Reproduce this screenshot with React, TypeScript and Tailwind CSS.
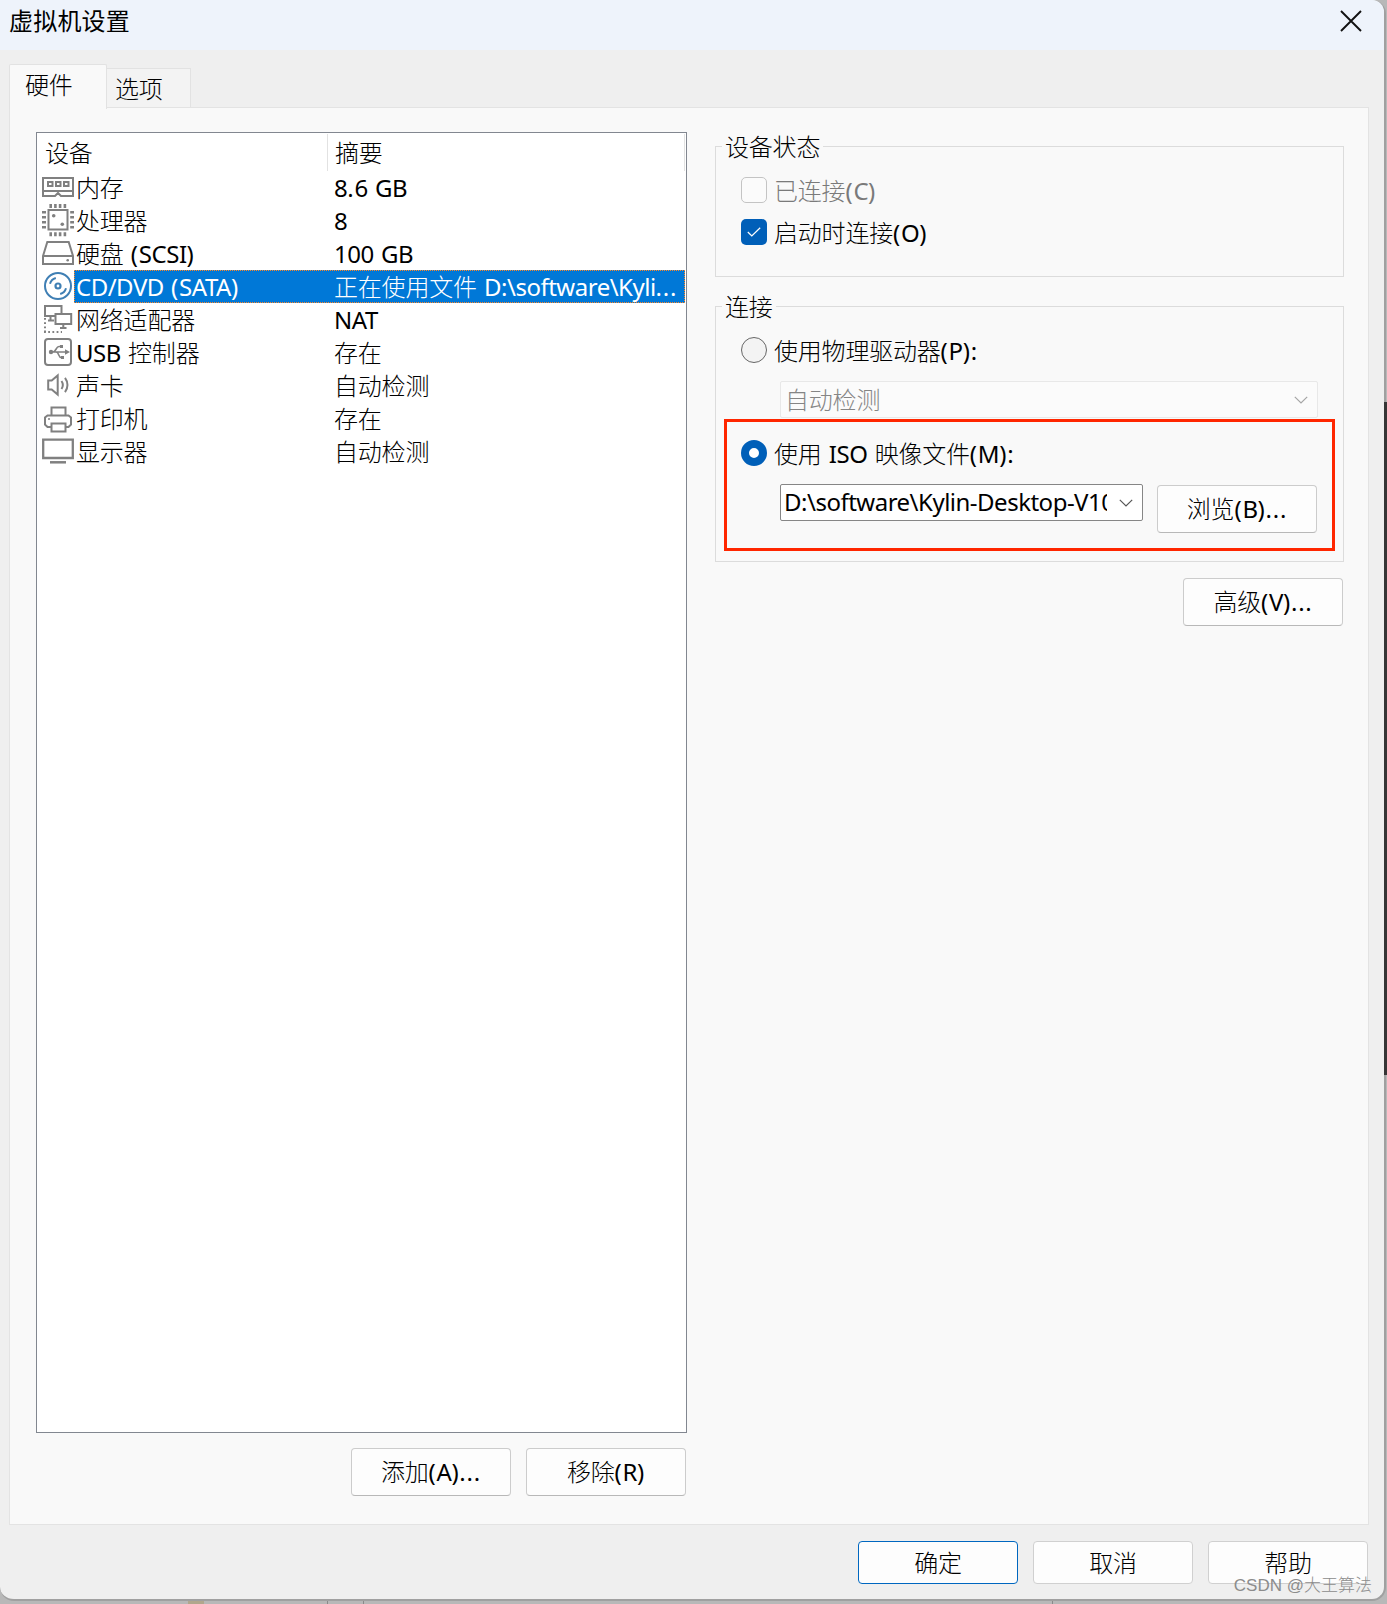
import React from 'react';
import clsx from 'clsx';

type IconName = 'memory' | 'cpu' | 'disk' | 'cd' | 'network' | 'usb' | 'sound' | 'printer' | 'display';

interface Device {
  icon: IconName;
  name: string;
  summary: string;
}

const devices: Device[] = [
  { icon: 'memory', name: '内存', summary: '8.6 GB' },
  { icon: 'cpu', name: '处理器', summary: '8' },
  { icon: 'disk', name: '硬盘 (SCSI)', summary: '100 GB' },
  { icon: 'cd', name: 'CD/DVD (SATA)', summary: '正在使用文件 D:\\software\\Kyli...' },
  { icon: 'network', name: '网络适配器', summary: 'NAT' },
  { icon: 'usb', name: 'USB 控制器', summary: '存在' },
  { icon: 'sound', name: '声卡', summary: '自动检测' },
  { icon: 'printer', name: '打印机', summary: '存在' },
  { icon: 'display', name: '显示器', summary: '自动检测' },
];

const shapes: Record<IconName, React.ReactNode> = {
  memory: (
    <>
      <path d="M1 7h30v13H1zM1 20v5h12l3-3 3 3h12v-5" />
      <path d="M6 11h4.5v4H6zM14 11h4.5v4H14zM22 11h4.5v4H22z" />
    </>
  ),
  cpu: (
    <>
      <path d="M6.5 6h19v19.5h-19z" />
      <path
        strokeWidth="2.6"
        d="M8.7 0v4M13.4 0v4M18.1 0v4M22.9 0v4M8.7 28.3v4M13.4 28.3v4M18.1 28.3v4M22.9 28.3v4M0 8.3h4M0 13.3h4M0 18.3h4M0 23.3h4M28.2 8.3h4M28.2 13.3h4M28.2 18.3h4M28.2 23.3h4"
      />
      <circle cx="11.7" cy="11.7" r="1.8" fill="currentColor" stroke="none" />
      <circle cx="20.3" cy="20.3" r="1.8" fill="currentColor" stroke="none" />
    </>
  ),
  disk: (
    <>
      <path d="M1 19 5.3 5h21.4L31 19v8H1zM1 19h30" />
      <circle cx="25.7" cy="23.3" r="1.3" fill="currentColor" stroke="none" />
    </>
  ),
  cd: (
    <>
      <circle cx="16" cy="16" r="13" />
      <circle cx="16" cy="16" r="2.5" strokeWidth="2.2" />
      <path d="M8 13.8A8.300 8.300 0 0 1 13.800 8M24 18.200a8.300 8.300 0 0 1-5.800 5.800" />
    </>
  ),
  network: (
    <>
      <path d="M13 13H3V3h16.5v7M8.5 13v4M6 17.5h6" />
      <path d="M13.5 11h15.7v10H13.5zM21.3 21v4M18 25h6.5" />
      <path strokeDasharray="1.800 2.400" d="M3 15v14.5M2 29h18" />
    </>
  ),
  usb: (
    <>
      <rect x="3" y="3" width="26" height="26" rx="3" />
      <path strokeWidth="1.6" d="M8 16h17M11 16c3 0 3-5.500 6-5.500h2M14 16c3 0 2.500 5.500 5 5.500h2" />
      <circle cx="9" cy="16" r="2.200" fill="currentColor" stroke="none" />
      <path fill="currentColor" stroke="none" d="M23 13.300 28 16l-5 2.700zM18 9h3v3h-3zM19 20h3v3h-3z" />
    </>
  ),
  sound: (
    <>
      <path d="M6.200 11.500h3.500l6-5v19l-6-5H6.200z" />
      <path d="M19.500 12c1.700 2.500 1.700 5.500 0 8M23 8.800c3.300 4.300 3.300 10.100 0 14.400" />
    </>
  ),
  printer: (
    <>
      <path d="M9.500 13V5.500h14V13M9 25H5.500L3 22.500v-7L5.500 13.500h21l2.500 2v7L26.500 25H24" />
      <path d="M9.500 21.500h14v8h-14z" />
      <circle cx="7" cy="17" r="1" fill="currentColor" stroke="none" />
    </>
  ),
  display: (
    <>
      <path strokeWidth="2.300" d="M1.200 4.600h29.600V23H1.200z" />
      <path strokeWidth="2.500" d="M8 27.300h16" />
    </>
  ),
};

const DeviceIcon: React.FC<{ name: IconName }> = ({ name }) => (
  <svg
    viewBox="0 0 32 33"
    className={clsx('h-[33px] w-8 shrink-0', name === 'cd' ? 'text-[#3f7fb4]' : 'text-[#808080]')}
    fill="none"
    stroke="currentColor"
    strokeWidth="2"
  >
    {shapes[name]}
  </svg>
);

// Chinese, Latin and bracket/dot runs each get their own tracking
const Label: React.FC<{ text: string; className?: string }> = ({ text, className }) => (
  <span className={clsx('whitespace-pre', className)}>
    {text.split(/([().]+|[^\x00-\x7f]+)/).filter(Boolean).map((run, i) => (
      <span
        key={i}
        className={
          /^[().]/.test(run)
            ? 'font-normal tracking-[0.8px]'
            : /^[\x20-\x7e]/.test(run)
              ? 'font-normal tracking-[-0.5px] [word-spacing:1.5px]'
              : 'tracking-[-0.2px]'
        }
      >
        {run}
      </span>
    ))}
  </span>
);

const Button: React.FC<{ text: string; className?: string }> = ({ text, className }) => (
  <button
    className={clsx(
      'flex w-40 shrink-0 items-center justify-center rounded-[4px] border bg-[#fdfdfd]',
      className ?? 'h-12 border-[#cccccc] border-b-[#b8b8b8] pb-0.5'
    )}
  >
    <Label text={text} />
  </button>
);

const Group: React.FC<{ title: string; className?: string; children: React.ReactNode }> = ({ title, className, children }) => (
  <section className={clsx('relative border border-[#dcdcdc]', className)}>
    <h2 className="absolute -top-[17px] left-1.5 bg-[#f9f9f9] px-[3px] leading-[34px]">
      <Label text={title} />
    </h2>
    {children}
  </section>
);

const Chevron: React.FC<{ className?: string }> = ({ className }) => (
  <svg viewBox="0 0 14 8" className={clsx('h-2 w-3.5 shrink-0', className)} fill="none" stroke="currentColor" strokeWidth="1.2">
    <path d="m.8.8 6.200 6.200L13.200.8" />
  </svg>
);

const DeviceList: React.FC = () => (
  <div className="h-[1301px] w-[651px] border border-[#828790] bg-white">
    <div className="flex h-[38px] pt-px pr-px">
      <div className="flex w-[291px] items-center border-r border-[#e2e2e2] pl-2">
        <Label text="设备" />
      </div>
      <div className="flex flex-1 items-center border-r border-[#e2e2e2] pl-[7px]">
        <Label text="摘要" />
      </div>
    </div>
    {devices.map((d) => (
      <div key={d.name} className="flex h-[33px] pr-px pl-[5px]">
        <DeviceIcon name={d.icon} />
        <div
          className={clsx(
            'flex flex-1 items-center border border-dotted',
            d.icon === 'cd' ? 'border-[#ff8726] bg-[#0078d7] text-white' : 'border-transparent'
          )}
        >
          <Label text={d.name} className="w-[259px] pl-px" />
          <Label text={d.summary} />
        </div>
      </div>
    ))}
  </div>
);

const App: React.FC = () => (
  <div className="relative h-[1604px] w-[1387px] overflow-hidden bg-[#b8b8b8] font-['Noto_Sans','Noto_Sans_CJK_SC',sans-serif] text-[24px] leading-[33px] font-light text-black">
    <div className="absolute bottom-0 left-[188px] h-[5px] w-4 bg-[#b1a78d]" />
    <div className="absolute bottom-0 left-[327px] h-[5px] w-[37px] border-x border-[#8a8a8a]" />
    <div className="absolute bottom-0 left-[1052px] h-[5px] w-px bg-[#8a8a8a]" />

    <div className="relative flex h-[1601px] w-[1386px] flex-col rounded-r-[14px] rounded-bl-[14px] border-r-2 border-b-2 border-[#a0a0a0] bg-[#efefef]">
      <header className="flex h-[50px] items-start justify-between rounded-tr-[12px] bg-[#eef3fb] pt-1 pr-[22px] pl-[9px]">
        <h1 className="font-normal tracking-[0.2px]">虚拟机设置</h1>
        <svg viewBox="0 0 22 22" className="mt-1.5 h-[22px] w-[22px]" fill="none" stroke="#111" strokeWidth="1.9">
          <path d="m1 1 20 20M21 1 1 21" />
        </svg>
      </header>

      <nav className="flex h-[58px] items-end pl-[9px]">
        <div className="relative z-10 -mb-px flex h-[45px] w-[98px] items-start rounded-t-[2px] border border-b-0 border-[#e2e2e2] bg-[#f9f9f9] pt-[3px] pl-[15px]">
          <Label text="硬件" />
        </div>
        <div className="flex h-10 w-[84px] items-center border-t border-r border-[#e2e2e2] bg-[#f3f3f3] pl-2">
          <Label text="选项" />
        </div>
      </nav>

      <main className="-mt-px ml-[9px] flex h-[1418px] w-[1360px] gap-7 border border-[#e3e3e3] bg-[#f9f9f9] pt-6 pl-[26px]">
        <div>
          <DeviceList />
          <div className="mt-[15px] flex justify-end gap-[15px] pr-px">
            <Button text="添加(A)..." />
            <Button text="移除(R)" />
          </div>
        </div>

        <div className="w-[629px] pt-3.5">
          <Group title="设备状态" className="h-[131px] pt-[26px] pl-[25px]">
            <div className="flex h-[34px] items-center gap-[7px] text-[#7a7a7a]">
              <span className="h-[26px] w-[26px] rounded-[5px] border border-[#c4c4c4] bg-[#fbfbfb]" />
              <Label text="已连接(C)" />
            </div>
            <div className="mt-2 flex h-[34px] items-center gap-[7px]">
              <span className="flex h-[26px] w-[26px] items-center justify-center rounded-[5px] bg-[#005fb8]">
                <svg viewBox="0 0 14 10" className="h-2.5 w-3.5" fill="none" stroke="white" strokeWidth="1.2">
                  <path d="m.8 5 4 4L13.200.8" />
                </svg>
              </span>
              <Label text="启动时连接(O)" />
            </div>
          </Group>

          <Group title="连接" className="mt-[29px] h-[256px] pt-[26px] pl-2">
            <div className="flex h-[34px] items-center gap-[7px] pl-[17px]">
              <span className="h-[26px] w-[26px] rounded-full border border-[#666] bg-[#f3f3f3]" />
              <Label text="使用物理驱动器(P):" />
            </div>
            <div className="mt-3.5 ml-14 flex h-[37px] w-[538px] items-center justify-between rounded-[2px] border border-[#e8e8e8] bg-[#fbfbfb] pr-[9px] pl-1 text-[#858585]">
              <Label text="自动检测" />
              <Chevron className="text-[#a5a5a5]" />
            </div>

            <div className="mt-px h-[132px] w-[611px] border-[3px] border-[#ff2600] pt-[14px] pl-3.5">
              <div className="flex h-[34px] items-center gap-[7px]">
                <span className="h-[26px] w-[26px] rounded-full border-8 border-[#005fb8] bg-white" />
                <Label text="使用 ISO 映像文件(M):" />
              </div>
              <div className="mt-3.5 ml-[39px] flex gap-3.5">
                <div className="flex h-[37px] w-[363px] items-center justify-between rounded-[2px] border border-[#868686] bg-white pr-[9px] pl-1">
                  <div className="w-[322px] overflow-hidden pb-0.5">
                    <Label text="D:\software\Kylin-Desktop-V10" className="-ml-px tracking-tight" />
                  </div>
                  <Chevron className="text-[#555]" />
                </div>
                <Button text="浏览(B)..." className="mt-px h-12 border-[#cccccc] border-b-[#b8b8b8] pb-0.5" />
              </div>
            </div>
          </Group>

          <div className="mt-4 flex justify-end pr-px">
            <Button text="高级(V)..." />
          </div>
        </div>
      </main>

      <footer className="flex gap-[15px] pt-4 pl-[858px]">
        <Button text="确定" className="h-[43px] border-[#0067c0]" />
        <Button text="取消" className="h-[43px] border-[#d0d0d0]" />
        <Button text="帮助" className="h-[43px] border-[#d0d0d0]" />
      </footer>
    </div>

    <div className="absolute top-[402px] right-0 h-[673px] w-[3px] bg-[#363636]" />

    <div className="absolute right-[15px] bottom-1 font-['Liberation_Sans','Noto_Sans_CJK_SC',sans-serif] text-[17px] leading-[28px] whitespace-nowrap text-[#8c8c8c]">
      CSDN @大王算法
    </div>
  </div>
);

export default App;
